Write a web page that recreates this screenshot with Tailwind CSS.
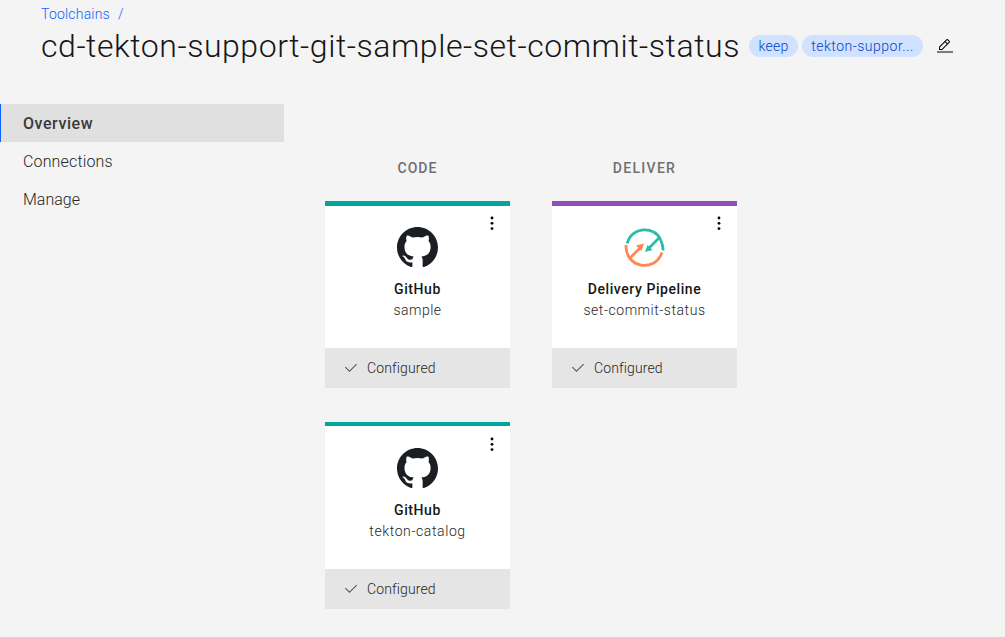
<!DOCTYPE html>
<html lang="en">
<head>
<meta charset="utf-8">
<title>Toolchain overview</title>
<script src="https://cdn.jsdelivr.net/npm/@tailwindcss/browser@4"></script>
</head>
<body class="h-[637px] overflow-hidden bg-[#f4f4f4] font-[Roboto,sans-serif] text-[#161616]">
<svg class="hidden">
  <symbol id="github" viewBox="0 0 16 16"><path fill="#1b1f23" d="M8 0C3.58 0 0 3.58 0 8c0 3.54 2.29 6.53 5.47 7.59.4.07.55-.17.55-.38 0-.19-.01-.82-.01-1.49-2.01.37-2.53-.49-2.69-.94-.09-.23-.48-.94-.82-1.13-.28-.15-.68-.52-.01-.53.63-.01 1.08.58 1.23.82.72 1.21 1.87.87 2.33.66.07-.52.28-.87.51-1.07-1.78-.2-3.64-.89-3.64-3.95 0-.87.31-1.59.82-2.15-.08-.2-.36-1.02.08-2.12 0 0 .67-.21 2.2.82.64-.18 1.32-.27 2-.27s1.36.09 2 .27c1.53-1.04 2.2-.82 2.2-.82.44 1.1.16 1.92.08 2.12.51.56.82 1.27.82 2.15 0 3.07-1.87 3.75-3.65 3.95.29.25.54.73.54 1.48 0 1.07-.01 1.93-.01 2.2 0 .21.15.46.55.38A8.01 8.01 0 0 0 16 8c0-4.42-3.58-8-8-8z"/></symbol>
  <symbol id="check" viewBox="0 0 32 32"><path fill="#525252" d="M13 24 4 15l1.414-1.414L13 21.171 26.586 7.586 28 9 13 24z"/></symbol>
  <symbol id="dots" viewBox="0 0 16 16"><circle cx="8" cy="3" r="1.400"/><circle cx="8" cy="8.300" r="1.400"/><circle cx="8" cy="13.600" r="1.400"/></symbol>
</svg>
<header class="h-[104px] pl-[41px] pt-[5px]">
  <nav class="flex h-[18px] items-center gap-[8px] text-[14px] leading-[18px] text-[#0f62fe]"><a class="font-light tracking-[0.2px]">Toolchains</a><span class="font-light">/</span></nav>
  <div class="flex h-[46px] items-center">
    <h1 class="w-[708px] whitespace-nowrap text-[32px] font-light leading-[40px] tracking-[0.55px]">cd-tekton-support-git-sample-set-commit-status</h1>
    <span class="flex h-[22px] w-[49px] items-center justify-center rounded-full bg-[#d0e2ff] text-[14px] font-light tracking-[0.3px] text-[#0043ce]">keep</span>
    <span class="ml-1 flex h-[22px] w-[121px] items-center justify-center rounded-full bg-[#d0e2ff] text-[14px] font-light tracking-[0.5px] text-[#0043ce]">tekton-suppor...</span>
    <svg class="ml-[14px] size-4" viewBox="0 0 32 32"><path d="M0 27h32v2H0zM25.400 9c.8-.8.8-2 0-2.800l-3.600-3.600c-.8-.8-2-.8-2.800 0l-15 15V24h6.400zM20.400 4 24 7.600l-3 3L17.400 7zM6 22v-3.600l10-10 3.600 3.600-10 10z"/></svg>
  </div>
</header>
<div class="flex">
  <nav class="w-[284px] text-[16px] text-[#262626]">
    <a class="flex h-[38px] items-center border-l border-[#0f62fe] bg-[#e0e0e0] pl-[22px] pt-[2px] font-medium tracking-[0.55px] text-[#393939]">Overview</a>
    <a class="flex h-[38px] items-center pl-[23px] pt-[2px] font-light tracking-[0.15px]">Connections</a>
    <a class="flex h-[38px] items-center pl-[23px] pt-[2px] font-light">Manage</a>
  </nav>
  <main class="ml-[41px] flex gap-[42px] pt-[54px] text-center text-[14px]">
    <section class="w-[185px]">
      <h2 class="h-[43px] leading-5 font-medium tracking-[1px] text-[#6f6f6f]">CODE</h2>
      <article class="relative flex h-[187px] flex-col border-t-5 border-[#00a79d] bg-white">
        <svg class="absolute right-[10px] top-[9px] size-4"><use href="#dots"/></svg>
        <div class="flex h-[142px] flex-col items-center pt-[21px]">
          <svg class="size-[41px]"><use href="#github"/></svg>
          <h3 class="mt-[11px] leading-5 font-medium tracking-[0.6px]">GitHub</h3>
          <p class="mt-[1px] leading-5 font-light tracking-[0.5px] text-[#262626]">sample</p>
        </div>
        <footer class="flex h-10 items-center gap-2 bg-[#e5e5e5] pl-[18px] text-[#262626]"><svg class="size-4"><use href="#check"/></svg><span class="font-light tracking-[0.12px]">Configured</span></footer>
      </article>
      <article class="relative mt-[34px] flex h-[187px] flex-col border-t-4 border-[#00a79d] bg-white">
        <svg class="absolute right-[10px] top-[10px] size-4"><use href="#dots"/></svg>
        <div class="flex h-[143px] flex-col items-center pt-[22px]">
          <svg class="size-[41px]"><use href="#github"/></svg>
          <h3 class="mt-[11px] leading-5 font-medium tracking-[0.6px]">GitHub</h3>
          <p class="mt-[1px] leading-5 font-light tracking-[0.6px] text-[#262626]">tekton-catalog</p>
        </div>
        <footer class="flex h-10 items-center gap-2 bg-[#e5e5e5] pl-[18px] text-[#262626]"><svg class="size-4"><use href="#check"/></svg><span class="font-light tracking-[0.12px]">Configured</span></footer>
      </article>
    </section>
    <section class="w-[185px]">
      <h2 class="h-[43px] leading-5 font-medium tracking-[1.300px] text-[#6f6f6f]">DELIVER</h2>
      <article class="relative flex h-[187px] flex-col border-t-5 border-[#8f4fb8] bg-white">
        <svg class="absolute right-[10px] top-[9px] size-4"><use href="#dots"/></svg>
        <div class="flex h-[142px] flex-col items-center pt-[21px]">
          <svg class="size-[42px]" viewBox="0 0 42 42" fill="none" stroke-width="2.800">
            <g stroke="#2bbda8"><path d="M3.200 16.500C7.500-1 31-1 36.500 12.500Q39 18 39.200 23.500M35 11 24.500 21.500"/><path d="M21 25 23.500 18l5 5z" fill="#2bbda8" stroke="none"/></g>
            <g stroke="#ff8850"><path d="M2 18C1 41 31 46 38 25.500M6.500 30.500 16 21"/><path d="M20 16.500 17.500 24l-5.500-5.500z" fill="#ff8850" stroke="none"/></g>
          </svg>
          <h3 class="mt-[10px] leading-5 font-medium tracking-[0.57px]">Delivery Pipeline</h3>
          <p class="mt-[1px] leading-5 font-light tracking-[0.550px] text-[#262626]">set-commit-status</p>
        </div>
        <footer class="flex h-10 items-center gap-2 bg-[#e5e5e5] pl-[18px] text-[#262626]"><svg class="size-4"><use href="#check"/></svg><span class="font-light tracking-[0.12px]">Configured</span></footer>
      </article>
    </section>
  </main>
</div>
</body>
</html>
